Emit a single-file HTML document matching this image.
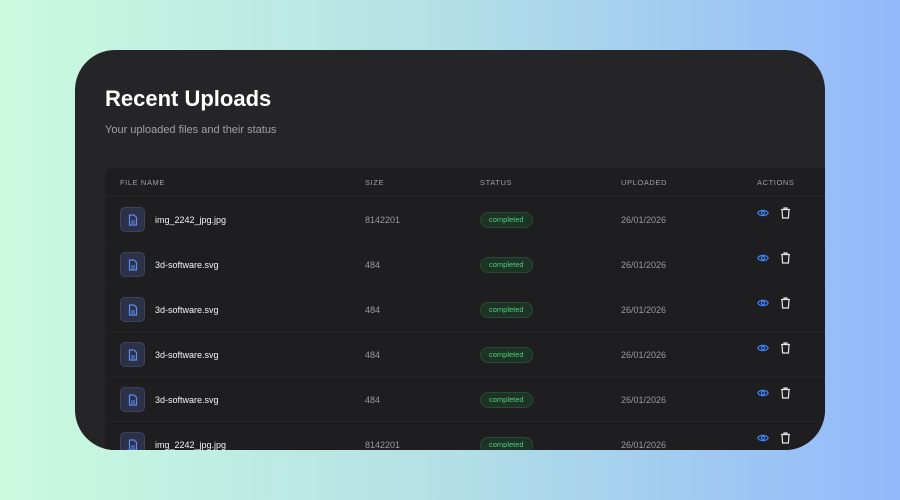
<!DOCTYPE html>
<html><head><style>
*{margin:0;padding:0;box-sizing:border-box}
body{width:900px;height:500px;overflow:hidden;background:linear-gradient(90deg,#cbfadf 0%,#b2e0e6 50%,#93b8fb 100%);font-family:"Liberation Sans",sans-serif;position:relative}
.card{position:absolute;left:75px;top:50px;width:750px;height:400px;border-radius:40px;background:#252527;overflow:hidden}
h1{position:absolute;left:30px;top:36px;font-size:22px;color:#fff;font-weight:bold}
.sub{position:absolute;left:30px;top:74px;font-size:11px;color:#a0a0a6}
.tbl{position:absolute;left:30px;top:118px;width:740px;height:300px;background:#1e1e20;border-radius:8px}
.hd{position:absolute;top:0;height:29px;line-height:29px;font-size:7.5px;letter-spacing:.6px;color:#a0a0a6;width:100%;border-bottom:1px solid #252527}
.hd span,.row span,.row svg{position:absolute}
.row{position:absolute;left:0;width:100%;height:45px;border-bottom:1px solid #242426;font-size:9px;color:#9a9aa0}
.ic{position:absolute;left:15px;top:10px;width:25px;height:25px;border-radius:5px;background:#2c3148;border:1px solid #3c4260}
.ic svg{left:7px;top:6px}
.nm{left:50px;top:18px;color:#f4f4f6}
.sz{left:260px;top:18px}
.dt{left:516px;top:18px}
.pill{left:375px;top:15px;height:16px;line-height:14px;padding:0 8px;border-radius:8px;background:#1d3325;border:1px solid #2a4a34;color:#4ad07a;font-size:7.5px}
.eye{left:652px;top:11px}
.trash{left:675px;top:10px}
</style></head><body>
<div class="card">
<h1>Recent Uploads</h1>
<div class="sub">Your uploaded files and their status</div>
<div class="tbl">
<div class="hd"><span style="left:15px">FILE NAME</span><span style="left:260px">SIZE</span><span style="left:375px">STATUS</span><span style="left:516px">UPLOADED</span><span style="left:652px">ACTIONS</span></div>
<div class="row" style="top:29px"><div class="ic"><svg width="10" height="12" viewBox="0 0 10 12"><path d="M1.5 1h4.5l2.5 2.5v7.5h-7z" fill="none" stroke="#5b8ef0" stroke-width="1.2"/><path d="M3 7h4M3 9h4" stroke="#5b8ef0"/></svg></div><span class="nm">img_2242_jpg.jpg</span><span class="sz">8142201</span><span class="pill">completed</span><span class="dt">26/01/2026</span><svg class="eye" width="12" height="10" viewBox="0 0 12 10"><path d="M0.8 5C2.5 1.5 9.5 1.5 11.2 5C9.5 8.5 2.5 8.5 0.8 5Z" fill="none" stroke="#3b82f6" stroke-width="1.3"/><circle cx="6" cy="5" r="1.6" fill="none" stroke="#3b82f6" stroke-width="1.2"/></svg><svg class="trash" width="11" height="12" viewBox="0 0 11 12"><path d="M1 2.5h9M4 2.5V1h3v1.5M2 2.5l.6 8.5h5.8l.6-8.5" fill="none" stroke="#e6e6e8" stroke-width="1.2"/></svg></div>
<div class="row" style="top:74px"><div class="ic"><svg width="10" height="12" viewBox="0 0 10 12"><path d="M1.5 1h4.5l2.5 2.5v7.5h-7z" fill="none" stroke="#5b8ef0" stroke-width="1.2"/><path d="M3 7h4M3 9h4" stroke="#5b8ef0"/></svg></div><span class="nm">3d-software.svg</span><span class="sz">484</span><span class="pill">completed</span><span class="dt">26/01/2026</span><svg class="eye" width="12" height="10" viewBox="0 0 12 10"><path d="M0.8 5C2.5 1.5 9.5 1.5 11.2 5C9.5 8.5 2.5 8.5 0.8 5Z" fill="none" stroke="#3b82f6" stroke-width="1.3"/><circle cx="6" cy="5" r="1.6" fill="none" stroke="#3b82f6" stroke-width="1.2"/></svg><svg class="trash" width="11" height="12" viewBox="0 0 11 12"><path d="M1 2.5h9M4 2.5V1h3v1.5M2 2.5l.6 8.5h5.8l.6-8.5" fill="none" stroke="#e6e6e8" stroke-width="1.2"/></svg></div>
<div class="row" style="top:119px"><div class="ic"><svg width="10" height="12" viewBox="0 0 10 12"><path d="M1.5 1h4.5l2.5 2.5v7.5h-7z" fill="none" stroke="#5b8ef0" stroke-width="1.2"/><path d="M3 7h4M3 9h4" stroke="#5b8ef0"/></svg></div><span class="nm">3d-software.svg</span><span class="sz">484</span><span class="pill">completed</span><span class="dt">26/01/2026</span><svg class="eye" width="12" height="10" viewBox="0 0 12 10"><path d="M0.8 5C2.5 1.5 9.5 1.5 11.2 5C9.5 8.5 2.5 8.5 0.8 5Z" fill="none" stroke="#3b82f6" stroke-width="1.3"/><circle cx="6" cy="5" r="1.6" fill="none" stroke="#3b82f6" stroke-width="1.2"/></svg><svg class="trash" width="11" height="12" viewBox="0 0 11 12"><path d="M1 2.5h9M4 2.5V1h3v1.5M2 2.5l.6 8.5h5.8l.6-8.5" fill="none" stroke="#e6e6e8" stroke-width="1.2"/></svg></div>
<div class="row" style="top:164px"><div class="ic"><svg width="10" height="12" viewBox="0 0 10 12"><path d="M1.5 1h4.5l2.5 2.5v7.5h-7z" fill="none" stroke="#5b8ef0" stroke-width="1.2"/><path d="M3 7h4M3 9h4" stroke="#5b8ef0"/></svg></div><span class="nm">3d-software.svg</span><span class="sz">484</span><span class="pill">completed</span><span class="dt">26/01/2026</span><svg class="eye" width="12" height="10" viewBox="0 0 12 10"><path d="M0.8 5C2.5 1.5 9.5 1.5 11.2 5C9.5 8.5 2.5 8.5 0.8 5Z" fill="none" stroke="#3b82f6" stroke-width="1.3"/><circle cx="6" cy="5" r="1.6" fill="none" stroke="#3b82f6" stroke-width="1.2"/></svg><svg class="trash" width="11" height="12" viewBox="0 0 11 12"><path d="M1 2.5h9M4 2.5V1h3v1.5M2 2.5l.6 8.5h5.8l.6-8.5" fill="none" stroke="#e6e6e8" stroke-width="1.2"/></svg></div>
<div class="row" style="top:209px"><div class="ic"><svg width="10" height="12" viewBox="0 0 10 12"><path d="M1.5 1h4.5l2.5 2.5v7.5h-7z" fill="none" stroke="#5b8ef0" stroke-width="1.2"/><path d="M3 7h4M3 9h4" stroke="#5b8ef0"/></svg></div><span class="nm">3d-software.svg</span><span class="sz">484</span><span class="pill">completed</span><span class="dt">26/01/2026</span><svg class="eye" width="12" height="10" viewBox="0 0 12 10"><path d="M0.8 5C2.5 1.5 9.5 1.5 11.2 5C9.5 8.5 2.5 8.5 0.8 5Z" fill="none" stroke="#3b82f6" stroke-width="1.3"/><circle cx="6" cy="5" r="1.6" fill="none" stroke="#3b82f6" stroke-width="1.2"/></svg><svg class="trash" width="11" height="12" viewBox="0 0 11 12"><path d="M1 2.5h9M4 2.5V1h3v1.5M2 2.5l.6 8.5h5.8l.6-8.5" fill="none" stroke="#e6e6e8" stroke-width="1.2"/></svg></div>
<div class="row" style="top:254px"><div class="ic"><svg width="10" height="12" viewBox="0 0 10 12"><path d="M1.5 1h4.5l2.5 2.5v7.5h-7z" fill="none" stroke="#5b8ef0" stroke-width="1.2"/><path d="M3 7h4M3 9h4" stroke="#5b8ef0"/></svg></div><span class="nm">img_2242_jpg.jpg</span><span class="sz">8142201</span><span class="pill">completed</span><span class="dt">26/01/2026</span><svg class="eye" width="12" height="10" viewBox="0 0 12 10"><path d="M0.8 5C2.5 1.5 9.5 1.5 11.2 5C9.5 8.5 2.5 8.5 0.8 5Z" fill="none" stroke="#3b82f6" stroke-width="1.3"/><circle cx="6" cy="5" r="1.6" fill="none" stroke="#3b82f6" stroke-width="1.2"/></svg><svg class="trash" width="11" height="12" viewBox="0 0 11 12"><path d="M1 2.5h9M4 2.5V1h3v1.5M2 2.5l.6 8.5h5.8l.6-8.5" fill="none" stroke="#e6e6e8" stroke-width="1.2"/></svg></div>
</div></div>
</body></html>
